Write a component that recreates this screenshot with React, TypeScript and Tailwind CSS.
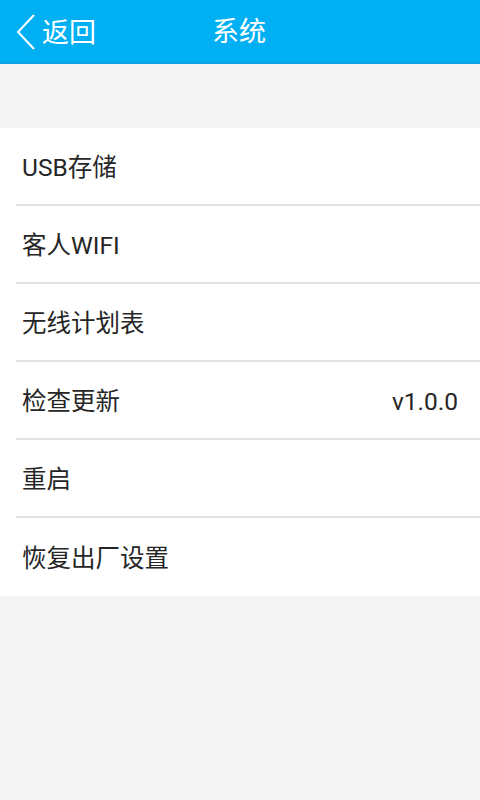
import React from 'react';

const items = [
  { label: 'USB存储' },
  { label: '客人WIFI' },
  { label: '无线计划表' },
  { label: '检查更新', value: 'v1.0.0' },
  { label: '重启' },
  { label: '恢复出厂设置' },
];

const App: React.FC = () => {
  return (
    <div
      className="w-[480px] h-[800px] bg-[#f4f4f4] flex flex-col"
      style={{ fontFamily: 'Roboto, "Noto Sans CJK SC", sans-serif' }}
    >
      {/* Header */}
      <div className="h-[64px] bg-[#00b0f2] border-b-2 border-[#0aa2e0] flex items-center relative">
        <div className="flex items-center pl-[15px] pt-[2px]">
          <svg width="22" height="38" viewBox="0 0 22 38" className="mr-[5px]">
            <path d="M19 2 L3 19 L19 36" fill="none" stroke="#ffffff" strokeWidth="2" />
          </svg>
          <span className="text-white text-[27px] leading-none pt-[2px]">返回</span>
        </div>
        <span className="absolute left-[212px] top-[19px] text-white text-[27px] leading-none">
          系统
        </span>
      </div>

      {/* List */}
      <div className="mt-[64px] bg-white">
        {items.map((item, i) => (
          <div key={i} className="pl-4">
            <div
              className={
                'h-[78px] flex items-center justify-between pl-[6px] pr-[22px] ' +
                (i < items.length - 1 ? 'border-b-2 border-[#e2e2e2]' : '')
              }
            >
              <span className="text-[24.5px] text-[#262626] pt-[5px]">{item.label}</span>
              {item.value && (
                <span className="text-[24.5px] text-[#262626] pt-[5px]">{item.value}</span>
              )}
            </div>
          </div>
        ))}
      </div>
    </div>
  );
};

export default App;
